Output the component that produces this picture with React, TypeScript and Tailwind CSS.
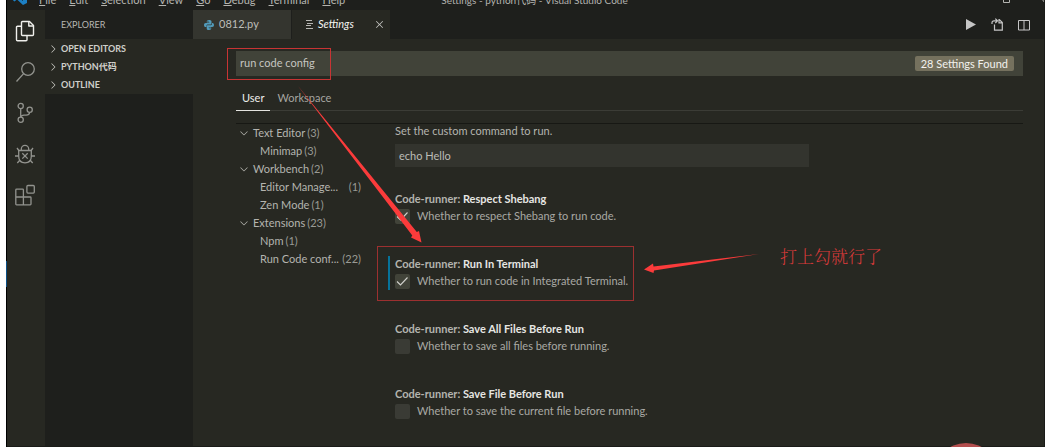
import React, { useState } from "react";
import { VscChevronDown, VscChevronRight, VscClose } from "react-icons/vsc";

const MENUS = ["File", "Edit", "Selection", "View", "Go", "Debug", "Terminal", "Help"];

const SECTIONS = ["OPEN EDITORS", "PYTHON代码", "OUTLINE"];

type TocRow = { label: string; count: number; parent?: boolean; cut?: boolean };

const TOC: TocRow[] = [
  { label: "Text Editor", count: 3, parent: true },
  { label: "Minimap", count: 3 },
  { label: "Workbench", count: 2, parent: true },
  { label: "Editor Manage...", count: 1, cut: true },
  { label: "Zen Mode", count: 1 },
  { label: "Extensions", count: 23, parent: true },
  { label: "Npm", count: 1 },
  { label: "Run Code conf...", count: 22, cut: true },
];

type Setting = { id: string; name: string; text: string; on: boolean; marked?: boolean };

const SETTINGS: Setting[] = [
  { id: "shebang", name: "Respect Shebang", text: "Whether to respect Shebang to run code.", on: true },
  { id: "terminal", name: "Run In Terminal", text: "Whether to run code in Integrated Terminal.", on: true, marked: true },
  { id: "save-all", name: "Save All Files Before Run", text: "Whether to save all files before running.", on: false },
  { id: "save-file", name: "Save File Before Run", text: "Whether to save the current file before running.", on: false },
];

function FilesIcon() {
  return (
    <svg viewBox="0 0 20 22" className="h-[22px] w-5" fill="none" stroke="currentColor" strokeWidth="1.400" strokeLinejoin="round">
      <path d="M7.500 1.500h7l4 4v9q0 1-1 1h-10q-1 0-1-1v-12q0-1 1-1z" />
      <path d="M13.800 1.700v4.300h4.400" />
      <path d="M6.200 6.200H2.500q-1 0-1 1v12.500q0 1 1 1h8.500q1 0 1-1v-4" />
    </svg>
  );
}

function SearchIcon() {
  return (
    <svg viewBox="0 0 20 22" className="h-[22px] w-5" fill="none" stroke="currentColor" strokeWidth="1.300">
      <circle cx="13" cy="8" r="6.300" />
      <path d="M8.600 12.600L1.500 20.500" />
    </svg>
  );
}

function BranchIcon() {
  return (
    <svg viewBox="0 0 20 22" className="h-[22px] w-5" fill="none" stroke="currentColor" strokeWidth="1.300">
      <circle cx="5.700" cy="4" r="2.600" />
      <circle cx="5.700" cy="17.800" r="2.600" />
      <circle cx="14.700" cy="7.800" r="2.600" />
      <path d="M5.700 6.600v8.600M14.700 10.400q-.5 2.700-3.500 2.700H9q-2.800 0-3.300 2.100" />
    </svg>
  );
}

function BugIcon() {
  return (
    <svg viewBox="0 0 20 22" className="h-[22px] w-5" fill="none" stroke="currentColor" strokeWidth="1.300">
      <path d="M3.700 7.500h12.600v6q0 6-6.300 6.300q-6.300-.3-6.300-6.300z" />
      <path d="M6.300 7.500V6a3.700 3.700 0 0 1 7.400 0v1.500" />
      <path d="M4.200 8L2 5M15.800 8l2.200-3M4 13H0M16 13h4M5 17l-2.700 3M15 17l2.700 3M7.300 10.200l5.400 5.400M12.700 10.200l-5.400 5.400" />
    </svg>
  );
}

function ExtensionsIcon() {
  return (
    <svg viewBox="0 0 20 22" className="h-[22px] w-5" fill="none" stroke="currentColor" strokeWidth="1.300">
      <rect x="11.900" y="1.500" width="7.400" height="7.600" rx="1" />
      <path d="M.8 13V6q0-.8.8-.8h6q.8 0 .8.800v14.700M.8 13h14.400q.8 0 .8.800v6.200q0 .8-.8.800H1.600q-.8 0-.8-.8z" />
    </svg>
  );
}

const ACTIVITIES = [
  { name: "Explorer", Icon: FilesIcon },
  { name: "Search", Icon: SearchIcon },
  { name: "Source Control", Icon: BranchIcon },
  { name: "Debug", Icon: BugIcon },
  { name: "Extensions", Icon: ExtensionsIcon },
];

function TitleBar() {
  return (
    <header className="relative flex h-[10px] shrink-0 items-end justify-between overflow-hidden bg-[#1e1f1c] text-[11px] leading-[18px] text-[#b4b4b0]">
      <div className="flex items-end">
        <svg viewBox="0 0 14 14" className="mr-3 ml-[6px] mb-[5px] h-[14px] w-[14px] shrink-0">
          <path fill="#1c7fc4" d="M10 0l4 2v10l-4 2-6-5.500L1.500 10.500 0 9.500 3 7 0 4.500l1.500-1L4 5.500zM10 4L6.200 7 10 10z" />
        </svg>
        <nav className="flex gap-[13px]">
          {MENUS.map((m) => (
            <button key={m} type="button" className="mb-px">
              <span className="underline">{m[0]}</span>
              {m.slice(1)}
            </button>
          ))}
        </nav>
      </div>
      <div className="absolute inset-x-0 bottom-px pl-[18px] text-center text-[10px]">
        Settings - python代码 - Visual Studio Code
      </div>
      <svg viewBox="0 0 46 10" className="h-[10px] w-[46px]" fill="none" stroke="currentColor">
        <path d="M5.500-3v5.500h6V-3M7.500-.5h6v-4M42.500-3L47 3" />
      </svg>
    </header>
  );
}

function ActivityBar() {
  return (
    <nav className="flex w-[38px] shrink-0 flex-col items-center gap-[19px] bg-[#272822] pt-[10px] pr-[2px]" aria-label="Views">
      {ACTIVITIES.map(({ name, Icon }, i) => (
        <button key={name} type="button" aria-label={name} className={i === 0 ? "text-[#f0f0ec]" : "text-[#92938e]"}>
          <Icon />
        </button>
      ))}
    </nav>
  );
}

function Sidebar() {
  return (
    <aside className="w-[148px] shrink-0 bg-[#1e1f1c] text-[9px]">
      <h2 className="pl-4 leading-[29px] text-[#b6b6b2]">EXPLORER</h2>
      <div className="bg-[#272822] pt-px">
        {SECTIONS.map((s) => (
          <button key={s} type="button" className="flex h-[18px] w-full items-center gap-[2px] pl-[2px] font-bold text-[#cfcfca]">
            <VscChevronRight size={12} className="shrink-0" />
            {s}
          </button>
        ))}
      </div>
    </aside>
  );
}

function Tabs() {
  return (
    <div className="flex h-[29px] shrink-0 items-stretch bg-[#1e1f1c]">
      <button type="button" className="mr-px flex w-[98px] items-center gap-[5px] bg-[#34352f] pl-[11px] text-[#bdbdb9]">
        <svg viewBox="0 0 16 16" className="h-[10px] w-[10px]" fill="#519aba">
          <path d="M8 0C5 0 4.500 1.200 4.500 2.500V4H8.500v.8H2.800C1 4.800 0 6 0 8s1 3.300 2.500 3.300H4V9.500C4 8 5 7.200 6.500 7.200h3.500c1.200 0 2-.8 2-2V2.500C12 .8 10.500 0 8 0zM6.300 1.300a.8.8 0 1 1 0 1.700.8.8 0 0 1 0-1.700z" />
          <path d="M8 16c3 0 3.500-1.200 3.500-2.500V12H7.500v-.8h5.700C15 11.200 16 10 16 8s-1-3.300-2.500-3.300H12.800V6.500C12.800 8 11.500 8.500 10 8.500H6.300c-1.200 0-2 .8-2 2v3C4.300 15.200 5.500 16 8 16zm1.700-1.300a.8.8 0 1 1 0-1.700.8.8 0 0 1 0 1.700z" />
        </svg>
        0812.py
      </button>
      <div className="flex w-[98px] items-center bg-[#272822] pl-[14px] pr-1">
        <svg viewBox="0 0 8 9" className="mr-[4px] h-[9px] w-2" stroke="#b8b8b4" fill="none">
          <path d="M0 .5h6M1 3.500h6M0 5.500h5M0 8.500h7" />
        </svg>
        <span className="text-[#f5f5f2] italic">Settings</span>
        <button type="button" aria-label="Close" className="ml-auto text-[#c8c8c4]">
          <VscClose size={13} />
        </button>
      </div>
      <div className="ml-auto flex items-center gap-[15px] pr-[14px] text-[#c5c5c5]">
        <button type="button" aria-label="Run code">
          <svg viewBox="0 0 10 11" className="h-[11px] w-[10px]" fill="currentColor">
            <path d="M0 0l10 5.500L0 11z" />
          </svg>
        </button>
        <button type="button" aria-label="Open settings file">
          <svg viewBox="0 0 12 13" className="h-[13px] w-3" fill="none" stroke="currentColor" strokeWidth="1.200">
            <path d="M3.500 6.500v5.700h7.800V4.500L8.300 1.600H7.500M8 1.600v3.200h3.200M1 6V4.800q0-2 2-2h3.300M4.300.6l2.200 2.200-2.200 2.200" />
          </svg>
        </button>
        <button type="button" aria-label="Split editor">
          <svg viewBox="0 0 12 12" className="h-3 w-3" fill="none" stroke="currentColor">
            <path d="M.5 1.500h11v9.500H.5zM6 1.500V11" />
          </svg>
        </button>
      </div>
    </div>
  );
}

function Toc() {
  return (
    <nav className="w-[125px] shrink-0 text-[#b4b4af]" aria-label="Settings groups">
      {TOC.map((r) => (
        <button
          key={r.label}
          type="button"
          className={"flex h-[18px] w-full items-center whitespace-nowrap " + (r.parent ? "pl-[2px]" : "pl-6")}
        >
          {r.parent && <VscChevronDown size={12} className="mr-[3px] shrink-0" />}
          <span>{r.label}</span>
          <span className={"text-[#999a94] " + (r.cut ? "ml-auto" : "ml-[2px]")}>({r.count})</span>
        </button>
      ))}
    </nav>
  );
}

function SettingItem({ item }: { item: Setting }) {
  const [on, setOn] = useState(item.on);
  return (
    <div className="pb-[31px]">
      <div className="relative">
        {item.marked && (
          <>
            <div className="absolute inset-y-0 -left-[7px] w-[2px] bg-[#06739b]" />
            <div className="absolute -top-[10px] -bottom-[11px] -left-[18px] w-[257px] border border-[#9c3030]" />
          </>
        )}
        <h3 className="leading-4 font-bold text-[#b4b4af]">
          Code-runner: <span className="text-[#e6e6e2]">{item.name}</span>
        </h3>
        <div className="flex h-[18px] items-center gap-[7px]">
          <span className="grid h-[15px] w-[15px] shrink-0">
            <input
              id={item.id}
              type="checkbox"
              checked={on}
              onChange={() => setOn(!on)}
              className={"col-start-1 row-start-1 h-[15px] w-[15px] appearance-none rounded-[2px] " + (on ? "bg-[#414339]" : "bg-[#3a3b35]")}
            />
            {on && (
              <svg viewBox="0 0 15 15" className="pointer-events-none col-start-1 row-start-1 h-[15px] w-[15px]" fill="none" stroke="#d2d2cd" strokeWidth="1.100">
                <path d="M2 7.500l3.500 3.500L12.500 3.500" />
              </svg>
            )}
          </span>
          <label htmlFor={item.id} className="whitespace-nowrap text-[#a9a9a4]">
            {item.text}
          </label>
        </div>
      </div>
    </div>
  );
}

function SettingsEditor() {
  return (
    <div className="flex min-h-0 flex-1 flex-col overflow-hidden bg-[#272822] pr-[21px] pl-[43px] pt-3">
      <div className="relative flex h-[25px] shrink-0 items-center bg-[#414339] pr-[9px]">
        <input
          type="text"
          aria-label="Search settings"
          defaultValue="run code config"
          className="min-w-0 flex-1 bg-transparent pl-1 text-[#c5c5c0] outline-none"
        />
        <span className="rounded-[2px] bg-[#75715e] px-[6px] leading-[15px] text-[#f2f2ee]">28 Settings Found</span>
        <div className="absolute -top-[3px] -left-[9px] h-8 w-[104px] border border-[#c83434]" />
      </div>
      <div className="mt-[10px] flex h-[25px] shrink-0 border-b border-[#3b3c36]">
        <button type="button" className="-mb-px border-b border-[#e4e4e0] px-[6px] text-[#ededea]">
          User
        </button>
        <button type="button" className="px-[7px] text-[#a5a5a0]">
          Workspace
        </button>
      </div>
      <div className="mt-3 flex min-h-0 flex-1 border-t border-[#171814]">
        <Toc />
        <main className="min-w-0 flex-1 pl-[34px]">
          <label htmlFor="command" className="block leading-[14px] text-[#b4b4af]">
            Set the custom command to run.
          </label>
          <input
            id="command"
            type="text"
            defaultValue="echo Hello"
            className="mt-[6px] mb-6 block h-[23px] w-[66%] bg-[#33342e] px-1 text-[#bcbcb7] outline-none"
          />
          {SETTINGS.map((s) => (
            <SettingItem key={s.id} item={s} />
          ))}
        </main>
      </div>
    </div>
  );
}

function Annotations() {
  return (
    <div className="pointer-events-none absolute inset-0 overflow-hidden">
      <svg viewBox="0 0 1045 447" className="absolute top-0 left-0 h-[447px] w-[1045px]" fill="#fb3b3b">
        <path d="M298 86L416.800 232L419 231L421.500 242.500L411 237.500L412.300 235.500z" />
        <path d="M759 254L653.500 266.500L653 263.500L644 269.500L653.500 273L654 270.500z" />
        <circle cx="966" cy="476" r="33" fill="#b34e4e" />
      </svg>
      <p className="absolute top-[246px] left-[780px] font-['Noto_Serif_CJK_SC','Noto_Sans_CJK_SC',serif] text-[17px] leading-5 font-light whitespace-nowrap text-[#d83a3a]">
        打上勾就行了
      </p>
    </div>
  );
}

export default function App() {
  return (
    <div className="relative flex h-screen overflow-hidden bg-white pl-[6px] font-['Lato','Noto_Sans_CJK_SC',sans-serif] text-[11px]">
      <div className="w-px shrink-0 bg-black pt-[261px]">
        <div className="h-[26px] bg-[#0a4f86]" />
      </div>
      <div className="flex min-w-0 flex-1 flex-col border-r border-b border-[#1a1b18]">
        <TitleBar />
        <div className="flex min-h-0 flex-1">
          <ActivityBar />
          <Sidebar />
          <div className="flex min-w-0 flex-1 flex-col">
            <Tabs />
            <SettingsEditor />
          </div>
        </div>
      </div>
      <Annotations />
    </div>
  );
}
